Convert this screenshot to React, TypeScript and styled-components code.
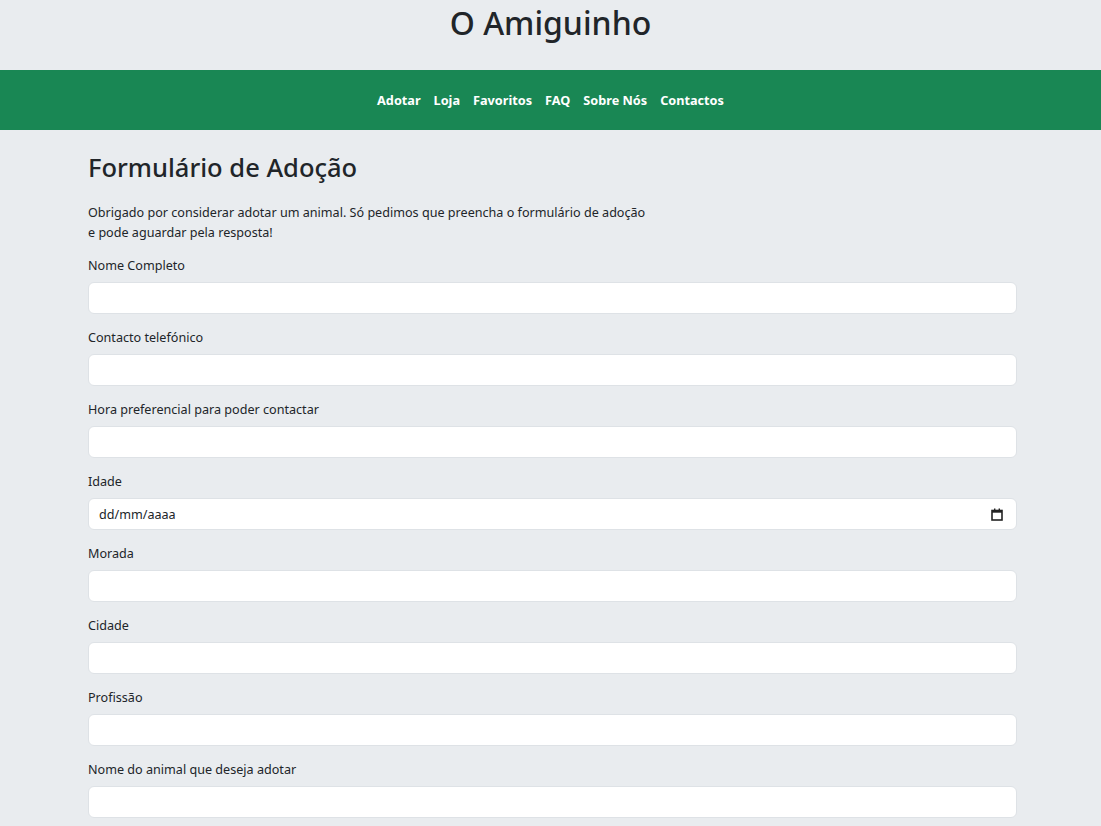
import React from "react";
import styled, { createGlobalStyle } from "styled-components";

const Global = createGlobalStyle`
  html, body { margin: 0; padding: 0; }
  body {
    background: #e9ecef;
    color: #212529;
    font-family: "Noto Sans", "Open Sans", sans-serif;
    overflow: hidden;
  }
  * { box-sizing: border-box; }
`;

const Header = styled.header`
  height: 70px;
  display: flex;
  align-items: flex-start;
  justify-content: center;
`;

const SiteTitle = styled.h1`
  margin: 2px 0 0;
  font-size: 32px;
  font-weight: 500;
  line-height: 42px;
`;

const Nav = styled.nav`
  height: 60px;
  background: #198754;
  display: flex;
  align-items: center;
  justify-content: center;
  gap: 13px;
`;

const NavLink = styled.a`
  color: #fff;
  font-weight: 700;
  font-size: 12.7px;
  text-decoration: none;
`;

const Main = styled.main`
  padding: 19px 84px 0 88px;
`;

const PageTitle = styled.h2`
  margin: 0 0 18px;
  font-size: 25.5px;
  font-weight: 500;
  line-height: 36px;
`;

const Intro = styled.p`
  margin: 0 0 13px;
  font-size: 12.6px;
  line-height: 20px;
  max-width: 565px;
`;

const Group = styled.div`
  display: flex;
  flex-direction: column;
  gap: 6px;
  margin-bottom: 14px;
`;

const Label = styled.label`
  font-size: 12.6px;
  line-height: 20px;
`;

const Input = styled.input`
  height: 32px;
  width: 100%;
  border: 1px solid #dee2e6;
  border-radius: 6px;
  background: #fff;
  padding: 4px 10px;
  font: inherit;
  font-size: 13px;
  outline: none;
`;

const DateBox = styled.div`
  height: 32px;
  border: 1px solid #dee2e6;
  border-radius: 6px;
  background: #fff;
  padding: 0 13px 0 10px;
  display: flex;
  align-items: center;
  justify-content: space-between;
  font-size: 12.6px;
`;

const fields = [
  "Nome Completo",
  "Contacto telefónico",
  "Hora preferencial para poder contactar",
  "Idade",
  "Morada",
  "Cidade",
  "Profissão",
  "Nome do animal que deseja adotar",
];

const CalendarIcon = () => (
  <svg width="12" height="13" viewBox="0 0 12 13" fill="none">
    <rect x="1" y="2.5" width="10" height="9.5" stroke="#222" strokeWidth="1.6" fill="none" />
    <rect x="1" y="2.5" width="10" height="2.2" fill="#222" />
    <rect x="3" y="0.5" width="1.4" height="2.5" fill="#222" />
    <rect x="7.6" y="0.5" width="1.4" height="2.5" fill="#222" />
  </svg>
);

export default function App() {
  return (
    <>
      <Global />
      <Header>
        <SiteTitle>O Amiguinho</SiteTitle>
      </Header>
      <Nav>
        {["Adotar", "Loja", "Favoritos", "FAQ", "Sobre Nós", "Contactos"].map((l) => (
          <NavLink key={l} href="#">{l}</NavLink>
        ))}
      </Nav>
      <Main>
        <PageTitle>Formulário de Adoção</PageTitle>
        <Intro>
          Obrigado por considerar adotar um animal. Só pedimos que preencha o formulário de adoção
          e pode aguardar pela resposta!
        </Intro>
        {fields.map((f) => (
          <Group key={f}>
            <Label>{f}</Label>
            {f === "Idade" ? (
              <DateBox>
                <span>dd/mm/aaaa</span>
                <CalendarIcon />
              </DateBox>
            ) : (
              <Input type="text" />
            )}
          </Group>
        ))}
      </Main>
    </>
  );
}
